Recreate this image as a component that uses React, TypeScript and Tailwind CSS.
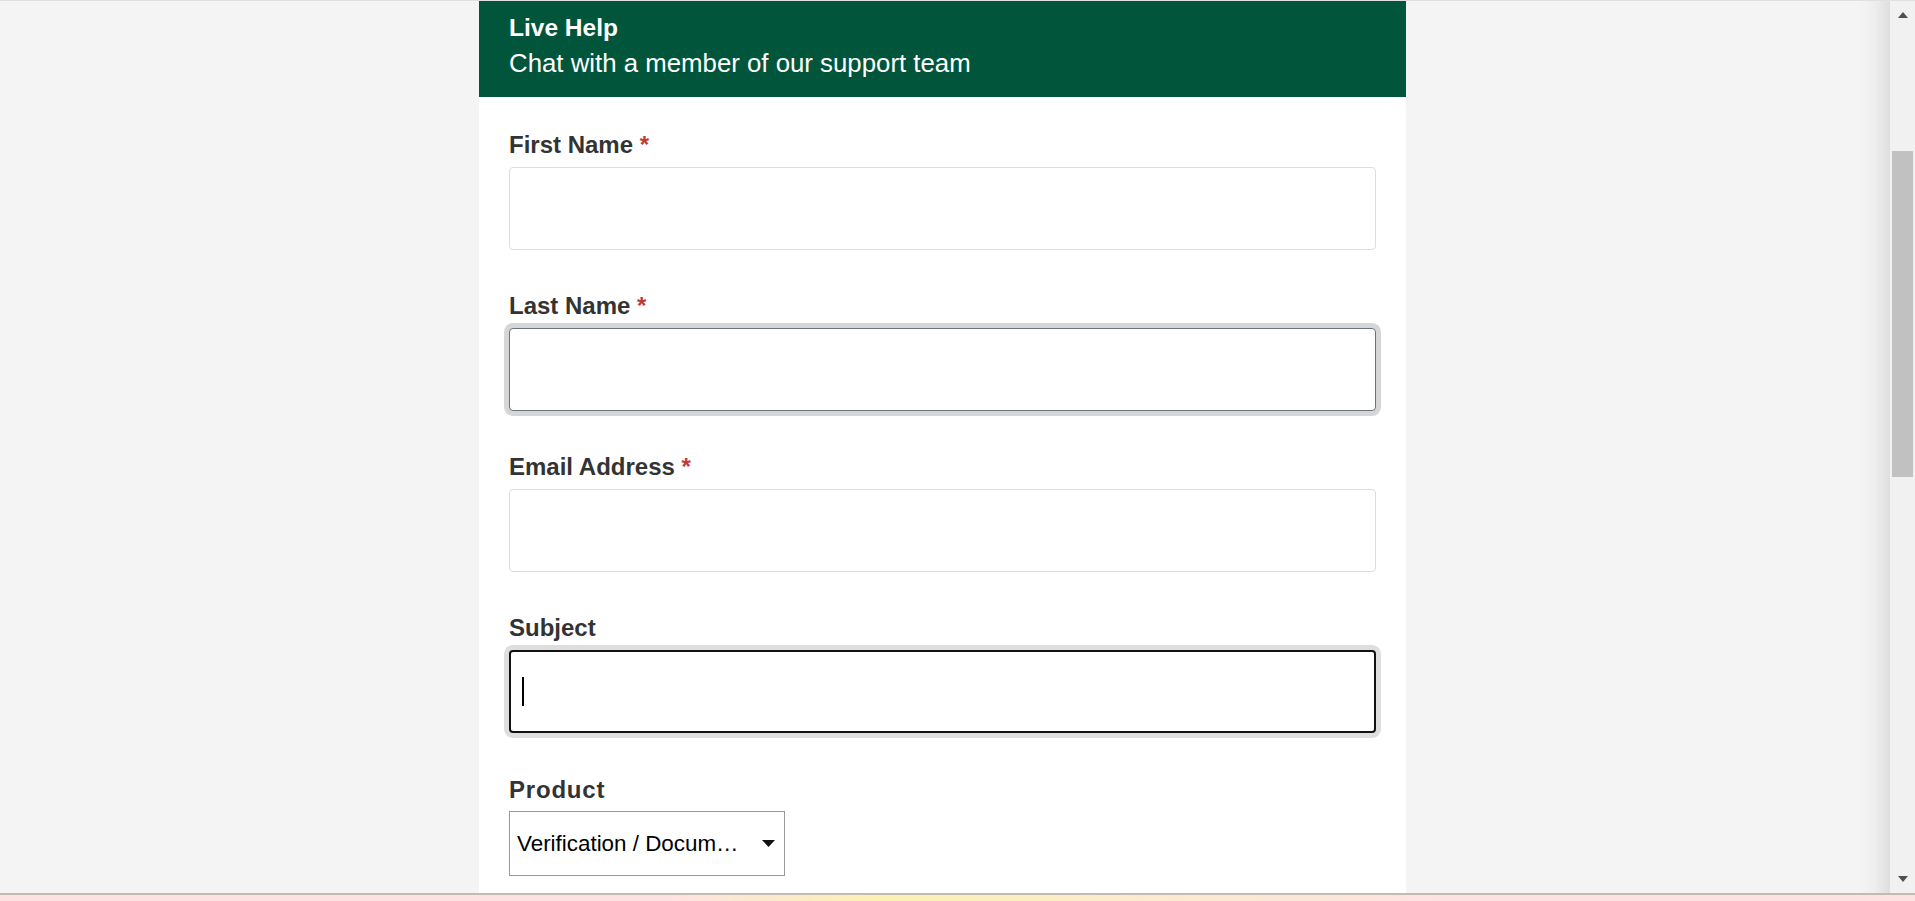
const fields = [
  { label: 'First Name', required: true, state: 'idle' },
  { label: 'Last Name', required: true, state: 'hover' },
  { label: 'Email Address', required: true, state: 'idle' },
  { label: 'Subject', required: false, state: 'focus' },
]

function Field({ label, required, state }: { label: string; required: boolean; state: string }) {
  const box =
    state === 'focus'
      ? 'border-2 border-[#111] shadow-[0_0_0_5px_#dedede]'
      : state === 'hover'
        ? 'border border-[#6b737d] shadow-[0_0_0_5px_#d6d6d6]'
        : 'border border-[#dddddd]'

  return (
    <div className="flex flex-col">
      <label className="h-[29px] text-[24px] leading-[29px] font-bold text-[#333]">
        {label}
        {required && <span className="text-[#c23934]"> *</span>}
      </label>
      <div className={`mt-[8px] h-[83px] rounded-[4px] bg-white flex items-center px-[11px] ${box}`}>
        {state === 'focus' && <div className="w-[2px] h-[29px] bg-black" />}
      </div>
    </div>
  )
}

export default function App() {
  return (
    <div
      className="h-[901px] w-[1915px] flex flex-col overflow-hidden bg-[#f4f4f4]"
      style={{ fontFamily: '"Liberation Sans", Arial, sans-serif' }}
    >
      {/* top hairline */}
      <div className="h-px bg-[#e0e0e0]" />

      <div className="flex h-[892px]">
        {/* page */}
        <div className="flex-1 pl-[479px]">
          <div className="w-[927px] h-full bg-white flex flex-col">
            {/* Header */}
            <div className="h-[96px] bg-[#01553a] px-[30px] pt-[12px] text-white">
              <h1 className="text-[24.5px] leading-[30px] font-bold">Live Help</h1>
              <p className="mt-[5px] text-[25.8px] leading-[31px]">Chat with a member of our support team</p>
            </div>

            {/* Form */}
            <div className="px-[30px] pt-[33px] flex flex-col gap-[41px]">
              {fields.map((f) => (
                <Field key={f.label} {...f} />
              ))}
            </div>

            <div className="px-[30px] mt-[42px] flex flex-col">
              <label className="h-[29px] text-[24px] leading-[29px] tracking-[0.8px] font-bold text-[#333]">Product</label>
              <div className="mt-[7px] w-[276px] h-[65px] border border-[#999] bg-white flex items-center pl-[7px] pr-[9px]">
                <span className="text-[22.4px] text-black whitespace-nowrap">Verification / Docum…</span>
                <svg className="ml-auto w-[13px] h-[7px]" viewBox="0 0 13 7">
                  <path d="M0 0h13L6.5 7z" fill="#111" />
                </svg>
              </div>
            </div>
          </div>
        </div>

        {/* scrollbar shadow */}
        <div className="w-[30px] bg-gradient-to-r from-[#f4f4f4] via-[#eeeeee] to-[#dedede]" />

        {/* scrollbar */}
        <div className="w-[25px] bg-[#f1f1f1] flex flex-col items-center">
          <div className="h-[28px] flex items-center justify-center">
            <svg className="w-[10px] h-[6px]" viewBox="0 0 10 6">
              <path d="M5 0L10 6H0z" fill="#505050" />
            </svg>
          </div>
          <div className="mt-[122px] w-[21px] h-[326px] bg-[#c1c1c1]" />
          <div className="mt-auto h-[28px] flex items-center justify-center">
            <svg className="w-[10px] h-[6px]" viewBox="0 0 10 6">
              <path d="M0 0h10L5 6z" fill="#505050" />
            </svg>
          </div>
        </div>
      </div>

      {/* bottom strip */}
      <div className="h-[2px] bg-[#c6b9b2]" />
      <div className="flex-1 bg-[linear-gradient(90deg,#fde2e2_0%,#fde2e2_35%,#fbf1b3_46%,#fbeccb_58%,#fde2e2_75%,#fde2e2_100%)]" />
    </div>
  )
}
